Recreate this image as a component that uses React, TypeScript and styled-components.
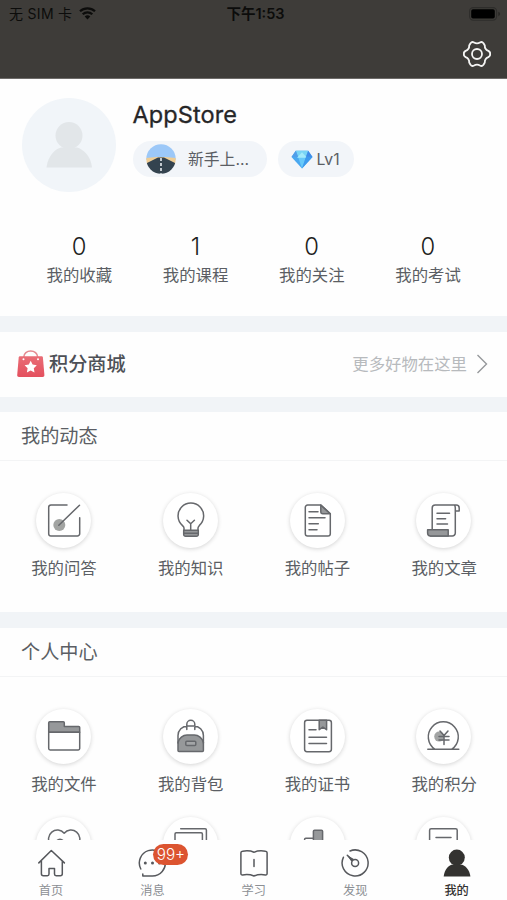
import React from "react";
import styled, { createGlobalStyle } from "styled-components";

const GlobalStyle = createGlobalStyle`
  *, *::before, *::after { box-sizing: border-box; }
  body {
    margin: 0;
    background: #fff;
    font-family: Inter, "Noto Sans CJK SC", sans-serif;
    color: #5b5e64;
  }
  svg { display: block; }
`;

const Screen = styled.div`
  width: 507px;
  height: 900px;
  display: flex;
  flex-direction: column;
  overflow: hidden;
  background: #fefefe;
`;

const Header = styled.header`
  height: 79px;
  flex: none;
  background: #3e3c39;
  border-bottom: 1px solid #6d6b69;
  display: flex;
  flex-direction: column;
`;

const StatusBar = styled.div`
  height: 28px;
  padding: 0 6px 0 9px;
  display: grid;
  grid-template-columns: 1fr auto 1fr;
  align-items: center;
  color: #0c0c0b;
  font-size: 14px;
  line-height: 28px;
`;

const Carrier = styled.div`
  display: flex;
  align-items: center;
  gap: 7px;
  letter-spacing: 0.3px;
  white-space: nowrap;

  svg {
    margin-bottom: 2px;
  }
`;

const Clock = styled.div`
  font-weight: 600;
  font-size: 14.5px;
  padding-left: 2px;
  padding-right: 1px;
`;

const BatterySlot = styled.div`
  display: flex;
  justify-content: flex-end;
  padding-bottom: 1px;
`;

const NavBar = styled.div`
  flex: 1;
  display: flex;
  justify-content: flex-end;
  padding: 12px 15px 0 0;
`;

const Content = styled.main`
  height: 761px;
  flex: none;
  overflow: hidden;
`;

const Profile = styled.section`
  height: 237px;
  padding: 19px 21px 0;
`;

const Identity = styled.div`
  display: flex;
  height: 94px;
  padding-left: 0.5px;
`;

const Avatar = styled.div`
  width: 94px;
  height: 94px;
  border-radius: 50%;
  background: #f1f5f9;
  overflow: hidden;
`;

const UserInfo = styled.div`
  padding: 2px 0 0 17px;
`;

const UserName = styled.div`
  font-size: 23.5px;
  line-height: 30px;
  letter-spacing: 0.1px;
  color: #262628;
  -webkit-text-stroke: 0.3px #262628;
`;

const Pills = styled.div`
  display: flex;
  gap: 11px;
  margin-top: 11px;
`;

const Pill = styled.div<{ $width: number; $inset: number; $gap: number }>`
  width: ${(p) => p.$width}px;
  height: 36px;
  border-radius: 18px;
  background: #f2f5f9;
  padding-left: ${(p) => p.$inset}px;
  display: flex;
  align-items: center;
  gap: ${(p) => p.$gap}px;
  font-size: 15.8px;
  line-height: 35px;
  white-space: nowrap;
`;

const Stats = styled.div`
  display: grid;
  grid-template-columns: repeat(4, 1fr);
  margin-top: 40px;
`;

const Stat = styled.div`
  text-align: center;
`;

const StatValue = styled.div`
  font-size: 23.8px;
  font-weight: 300;
  line-height: 30px;
  color: #1c1d20;
`;

const Label = styled.div`
  font-size: 16.4px;
  line-height: 26px;
  padding-left: 0.5px;
  text-align: center;
  white-space: nowrap;
`;

const Divider = styled.div<{ $height: number }>`
  height: ${(p) => p.$height}px;
  background: #f1f4f7;
`;

const MallRow = styled.section`
  height: 65px;
  padding: 0 19px 1px 17px;
  display: flex;
  align-items: center;
`;

const MallTitle = styled.div`
  flex: 1;
  margin-left: 4px;
  font-size: 19.2px;
  line-height: 28px;
  font-weight: 500;
  color: #4d5056;
  padding-bottom: 1px;
`;

const MallHint = styled.div`
  font-size: 16.4px;
  line-height: 24px;
  color: #b7babd;
  margin-right: 9px;
  padding-bottom: 1px;
`;

const SectionTitle = styled.h2<{ $height: number }>`
  height: ${(p) => p.$height}px;
  margin: 0;
  padding: 0 21px;
  border-bottom: 1px solid #f3f4f5;
  font-size: 19.2px;
  font-weight: 400;
  line-height: 48px;
`;

const Grid = styled.div<{ $height: number }>`
  height: ${(p) => p.$height}px;
  padding-top: 31.5px;
  display: grid;
  grid-template-columns: repeat(4, 1fr);
  grid-auto-rows: 108px;
  overflow: hidden;
`;

const Tile = styled.div`
  display: flex;
  flex-direction: column;
  align-items: center;
  gap: 7.5px;
  padding-left: 0.7px;
`;

const Disc = styled.div`
  width: 55px;
  height: 55px;
  flex: none;
  border-radius: 50%;
  background: #fff;
  box-shadow: 0 1px 4px rgba(0, 0, 0, 0.17);
`;

const TabBar = styled.nav`
  height: 60px;
  flex: none;
  background: #fefefe;
  display: grid;
  grid-template-columns: repeat(5, 1fr);
`;

const Tab = styled.div<{ $active?: boolean }>`
  padding: 8px 0 0 0.6px;
  display: flex;
  flex-direction: column;
  align-items: center;
  font-size: 12.2px;
  line-height: 18px;
  font-weight: ${(p) => (p.$active ? 500 : 400)};
  color: ${(p) => (p.$active ? "#333230" : "#8c8f94")};
`;

const TabIcon = styled.div`
  position: relative;
  width: 30px;
  height: 30px;
  margin-bottom: 4px;
`;

const Badge = styled.span`
  position: absolute;
  left: 16px;
  top: -4px;
  width: 35px;
  height: 21px;
  border-radius: 10.5px;
  background: #dc5430;
  color: #fff;
  font-size: 15.3px;
  font-weight: 300;
  line-height: 21px;
  text-align: center;
`;

const INK = "#66686c";
const GREY = "#96989a";

const Glyph = ({ children }: { children: React.ReactNode }) => (
  <svg width="55" height="55" viewBox="0 0 55 55" fill="none" stroke={INK} strokeWidth="1.5" strokeLinecap="round" strokeLinejoin="round">
    {children}
  </svg>
);

const TabGlyph = ({ children }: { children: React.ReactNode }) => (
  <svg width="30" height="30" viewBox="0 0 30 30" fill="none" stroke="#56585c" strokeWidth="1.5" strokeLinecap="round" strokeLinejoin="round">
    {children}
  </svg>
);

type Item = { id: string; label?: string; icon: React.ReactNode };

const activity: Item[] = [
  {
    id: "qa",
    label: "我的问答",
    icon: (
      <>
        <circle cx="23.3" cy="32" r="6" fill="#a2a4a2" stroke="none" />
        <path d="M31 12H15a2.3 2.3 0 0 0-2.3 2.3v26.4A2.3 2.3 0 0 0 15 43h26.4a2.3 2.3 0 0 0 2.3-2.3V24.8M43.5 12.2 22.8 32.3" />
      </>
    ),
  },
  {
    id: "knowledge",
    label: "我的知识",
    icon: (
      <>
        <path d="M20.7 37.3h14.6v4.2a1.8 1.8 0 0 1-1.8 1.8h-11a1.8 1.8 0 0 1-1.8-1.8z" fill={GREY} />
        <path d="M21 37.3V35c0-1-.8-1.7-1.7-2.6A12.8 12.8 0 1 1 36.4 32.4C35.6 33.3 35 34 35 35v2.3M24 27.3l3.7 3.4 3.7-3.4M27.7 30.7v6.6M21 40.3h14" />
      </>
    ),
  },
  {
    id: "posts",
    label: "我的帖子",
    icon: (
      <>
        <path d="M30.8 12v6.7a2 2 0 0 0 2 2h7.5z" fill={GREY} />
        <path d="M30.8 12H17.6a2.3 2.3 0 0 0-2.3 2.3v26.4a2.3 2.3 0 0 0 2.3 2.3H38a2.3 2.3 0 0 0 2.3-2.3v-20zM19 18.8h9M19 24.7h16M19 30.7h9.3M19 36.7h8" />
      </>
    ),
  },
  {
    id: "articles",
    label: "我的文章",
    icon: (
      <>
        <path d="M16.2 36.7V15a3 3 0 0 1 3-3h21a3 3 0 0 1 3 3v3h-4M38.7 12.4c.4.8.6 1.6.6 2.6v25a3 3 0 0 1-3 3H14.5" />
        <path d="M11.6 36.7h20.6V43H14.5a3 3 0 0 1-2.9-3z" fill={GREY} />
        <path d="M21 20.2h12.5M21 25.8h8.6M21 31h10.5" />
      </>
    ),
  },
];

const personal: Item[] = [
  {
    id: "files",
    label: "我的文件",
    icon: (
      <>
        <path d="M12.7 23.3v-9.6c0-.6.4-1 1-1h13.6c.6 0 1 .4 1 1v3.8h14.4c.6 0 1 .4 1 1v4.8z" fill={GREY} />
        <path d="M12.7 23.3h31v16.2c0 .8-.6 1.4-1.4 1.4H14.1c-.8 0-1.4-.6-1.4-1.4z" />
      </>
    ),
  },
  {
    id: "backpack",
    label: "我的背包",
    icon: (
      <>
        <path d="M15 33.5c1-4.4 5-7.4 9-7.4h7.4c4 0 8 3 9 7.4v8c0 .6-.4 1-1 1H16c-.6 0-1-.4-1-1z" fill={GREY} />
        <path d="M15 34v-7.5A9.5 9.5 0 0 1 24.5 17H31a9.5 9.5 0 0 1 9.4 9.5V34M23.8 20.5v-5.2a4 4 0 0 1 8 0v5.2" />
        <rect x="22.8" y="32.2" width="10" height="4.2" rx="1" fill="#a3a5a7" />
      </>
    ),
  },
  {
    id: "certificates",
    label: "我的证书",
    icon: (
      <>
        <rect x="14.6" y="11.3" width="26.8" height="31.4" rx="2.4" />
        <path d="M29.2 11.3v9.4l3.7-2.6 3.7 2.6v-9.4z" fill={GREY} />
        <path d="M19 20.8h7M19 28.2h17.5M19 34.6h17.5" />
      </>
    ),
  },
  {
    id: "points",
    label: "我的积分",
    icon: (
      <>
        <circle cx="23.2" cy="27.6" r="5" fill="#a2a4a4" stroke="none" />
        <path d="M18.8 40.2a15 15 0 1 1 17 0M11.8 40.2h31M24 22l4 4.6 4-4.6M28 26.6v9M23 27.4h10M23 31h10" />
      </>
    ),
  },
  {
    id: "favourites",
    icon: <path d="M28.2 41 14.6 27.5A8 8 0 0 1 28.2 16.2 8 8 0 0 1 41.8 27.5zM20.8 23.8a4 4 0 0 1 6.4 0" />,
  },
  {
    id: "albums",
    icon: <path d="M12 40V17c0-.7.5-1.2 1.2-1.2h25c.7 0 1.2.5 1.2 1.2v23zM17.7 11.8h24.5c.7 0 1.2.5 1.2 1.2v22" />,
  },
  {
    id: "ranking",
    icon: (
      <>
        <path d="M23.4 41V14.3c0-.6.5-1.1 1.1-1.1h7c.6 0 1.1.5 1.1 1.1V41z" fill={GREY} />
        <path d="M14.6 41V22.4c0-.6.5-1.1 1.1-1.1h7.7M32.6 27H41v14" />
      </>
    ),
  },
  {
    id: "notes",
    icon: (
      <>
        <rect x="13.6" y="11.8" width="27.6" height="30" rx="1.5" />
        <path d="M20 20.5h15" />
      </>
    ),
  },
];

const stats = [
  ["0", "我的收藏"],
  ["1", "我的课程"],
  ["0", "我的关注"],
  ["0", "我的考试"],
];

const tabs = [
  {
    label: "首页",
    icon: <path d="M2.8 14.9 15.3 2.5 28.4 14.9M5.4 13v12.7a2 2 0 0 0 2 2h4c.9 0 1.6-.7 1.6-1.6v-5.7h5.5v5.7c0 .9.7 1.6 1.6 1.6h4.2a2 2 0 0 0 2-2V13" />,
  },
  {
    label: "消息",
    badge: "99+",
    icon: (
      <>
        <path d="M3.800 21A13 13 0 1 1 15.300 28H5.800V26" />
        <g fill="#56585c" stroke="none">
          <circle cx="8.3" cy="15" r="1.5" />
          <circle cx="15.5" cy="15" r="1.5" />
          <circle cx="22.5" cy="15" r="1.5" />
        </g>
      </>
    ),
  },
  {
    label: "学习",
    icon: <path d="M15 4.2c-3.5-1.600-8-1.600-11.500-1-.9.1-1.600.7-1.600 1.600v20.800c0 1 .8 1.600 1.700 1.400 3.400-.7 7.700-.5 11.400 1 3.700-1.500 8-1.700 11.400-1 .9.2 1.700-.4 1.700-1.400V4.800c0-.9-.7-1.500-1.600-1.600-3.500-.6-8-.6-11.500 1zM15 11.500v7" />,
  },
  {
    label: "发现",
    icon: (
      <>
        <path d="M10 3a13 13 0 1 1-6.600 6.300M12.300 12.400 7.300 7.300" />
        <path d="m7 7 6.800 4-2.500 2.500z" fill="#56585c" stroke="none" />
        <circle cx="15.1" cy="15" r="3.5" />
      </>
    ),
  },
  {
    label: "我的",
    active: true,
    icon: (
      <g fill="#333230" stroke="none">
        <circle cx="14.8" cy="9.6" r="8" />
        <path d="M1.700 28.600C2.200 21.500 7 16.400 11 16.400h7.600c4 0 9.200 5.100 9.800 12.200z" />
      </g>
    ),
  },
];

const WifiIcon = () => (
  <svg width="17" height="13" viewBox="0 0 17 13" fill="none" stroke="#0c0c0b" strokeWidth="2.2">
    <path d="M1 4.300a11 11 0 0 1 15 0M3.700 7.300a7 7 0 0 1 9.600 0" />
    <path d="M8.500 12.500 5.700 9.600a4 4 0 0 1 5.600 0z" fill="#0c0c0b" stroke="none" />
  </svg>
);

const BatteryIcon = () => (
  <svg width="32" height="14" viewBox="0 0 32 14">
    <rect x=".6" y=".6" width="27" height="12.6" rx="3.6" fill="none" stroke="#2e2d2b" strokeWidth="1.1" />
    <rect x="2.2" y="2.2" width="23.6" height="9.4" rx="1.8" fill="#000" />
    <path d="M29.300 4.800v4.400q1.800-.6 1.800-2.200t-1.800-2.200" fill="#292826" />
  </svg>
);

const SettingsIcon = () => (
  <svg width="30" height="28" viewBox="0 0 30 28" fill="none" stroke="#f4f4f3" strokeWidth="1.8" strokeLinejoin="round">
    <path d="M8.500 3.200Q10 1.300 12 2.500Q15 4.400 18 2.500Q20 1.300 21.500 3.200L22.800 5.500Q22.600 9.400 26.300 10.900Q28.500 12.100 28.100 14Q28.500 15.900 26.300 17.100Q22.600 18.600 22.800 22.500L21.500 24.800Q20 26.700 18 25.500Q15 23.600 12 25.500Q10 26.700 8.500 24.800L7.200 22.500Q7.400 18.600 3.700 17.100Q1.500 15.900 1.900 14Q1.500 12.100 3.700 10.900Q7.400 9.400 7.200 5.500Z" />
    <circle cx="15" cy="14" r="5" />
  </svg>
);

const AvatarIcon = () => (
  <svg width="94" height="94" viewBox="0 0 94 94" fill="#e2e6e9">
    <circle cx="47" cy="37.500" r="13.500" />
    <path d="M24.500 69.500C26 57 34 50.500 39 49.500h16C61 51 69 58 70 69.500z" />
  </svg>
);

const RoadIcon = () => (
  <svg width="30" height="30" viewBox="0 0 30 30">
    <defs>
      <clipPath id="road-disc">
        <circle cx="15" cy="15" r="14.700" />
      </clipPath>
    </defs>
    <g clipPath="url(#road-disc)">
      <path d="M0 0h30v16H0z" fill="#9cc8f8" />
      <path d="M0 14 11 13h8l11 1v6H0z" fill="#efcd95" />
      <path d="M0 19.500 12 13.500h6l12 6V30H0z" fill="#34434f" />
      <path d="M15 14v16" stroke="#e9edf0" strokeWidth="1.600" strokeDasharray="3 2" />
    </g>
  </svg>
);

const DiamondIcon = () => (
  <svg width="22" height="19" viewBox="0 0 22 19">
    <path d="M4.800.8h12.400L21.500 7 11 18.500.5 7z" fill="#4aa8f0" />
    <path d="M4.800.8h12.400L15 6.800H7z" fill="#79d5f5" />
    <path d="M7 6.800h8l-4 11.700z" fill="#67c9fa" />
    <path d="M4.800.8 7 6.800.5 7z" fill="#529ee9" />
    <path d="M17.200.8 15 6.800l6.500.2z" fill="#408ce8" />
    <path d="m11 2.300 5 5.500H6z" fill="#a3eafa" />
    <path d="m15 7 6.500 0L11 18.500z" fill="#3e9bed" />
  </svg>
);

const BagIcon = () => (
  <svg width="28" height="28" viewBox="0 0 28 28">
    <defs>
      <linearGradient id="bag-fill" x2="0" y2="1">
        <stop stopColor="#e96d76" />
        <stop offset="1" stopColor="#e4505e" />
      </linearGradient>
    </defs>
    <path d="M6.700 9v-1.500C6.700-1.200 20.700-1.200 20.700 7.500V9" fill="none" stroke="#e58b91" strokeWidth="1.600" />
    <path d="M3.200 6.200h21.200c.8 0 1.400.5 1.500 1.300L27.400 25c.1 1.200-.6 2-1.800 2H2C.8 27 .1 26.200.2 25L1.700 7.500c.1-.8.7-1.300 1.500-1.300z" fill="url(#bag-fill)" />
    <circle cx="6.500" cy="9.300" r="1" fill="#fff" />
    <circle cx="21" cy="9.300" r="1" fill="#fff" />
    <path d="m13.700 10.700 1.900 3.900 4.200.6-3 3 .7 4.200-3.800-2-3.800 2 .7-4.200-3-3 4.200-.6z" fill="#fff" />
  </svg>
);

const Chevron = () => (
  <svg width="12" height="20" viewBox="0 0 12 20" fill="none" stroke="#96989b" strokeWidth="1.400">
    <path d="m1.500 1 9 9-9 9" />
  </svg>
);

const TileGrid = ({ items, height }: { items: Item[]; height: number }) => (
  <Grid $height={height}>
    {items.map((item) => (
      <Tile key={item.id}>
        <Disc>
          <Glyph>{item.icon}</Glyph>
        </Disc>
        {item.label && <Label>{item.label}</Label>}
      </Tile>
    ))}
  </Grid>
);

export default function App() {
  return (
    <>
      <GlobalStyle />
      <Screen>
        <Header>
          <StatusBar>
            <Carrier>
              无 SIM 卡
              <WifiIcon />
            </Carrier>
            <Clock>下午1:53</Clock>
            <BatterySlot>
              <BatteryIcon />
            </BatterySlot>
          </StatusBar>
          <NavBar>
            <SettingsIcon />
          </NavBar>
        </Header>

        <Content>
          <Profile>
            <Identity>
              <Avatar>
                <AvatarIcon />
              </Avatar>
              <UserInfo>
                <UserName>AppStore</UserName>
                <Pills>
                  <Pill $width={134.5} $inset={13.5} $gap={12}>
                    <RoadIcon />
                    新手上...
                  </Pill>
                  <Pill $width={76} $inset={12.5} $gap={4}>
                    <DiamondIcon />
                    Lv1
                  </Pill>
                </Pills>
              </UserInfo>
            </Identity>
            <Stats>
              {stats.map(([value, label]) => (
                <Stat key={label}>
                  <StatValue>{value}</StatValue>
                  <Label>{label}</Label>
                </Stat>
              ))}
            </Stats>
          </Profile>

          <Divider $height={16} />
          <MallRow>
            <BagIcon />
            <MallTitle>积分商城</MallTitle>
            <MallHint>更多好物在这里</MallHint>
            <Chevron />
          </MallRow>

          <Divider $height={15} />
          <SectionTitle $height={49}>我的动态</SectionTitle>
          <TileGrid items={activity} height={151} />

          <Divider $height={16} />
          <SectionTitle $height={49}>个人中心</SectionTitle>
          <TileGrid items={personal} height={163} />
        </Content>

        <TabBar>
          {tabs.map((tab) => (
            <Tab key={tab.label} $active={tab.active}>
              <TabIcon>
                <TabGlyph>{tab.icon}</TabGlyph>
                {tab.badge && <Badge>{tab.badge}</Badge>}
              </TabIcon>
              {tab.label}
            </Tab>
          ))}
        </TabBar>
      </Screen>
    </>
  );
}
